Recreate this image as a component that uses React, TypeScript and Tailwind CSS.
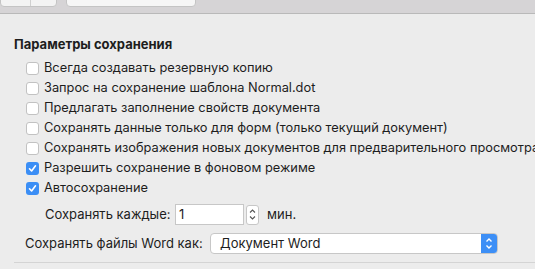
import React from 'react';

const font = { fontFamily: 'Inter, "Noto Sans", sans-serif' };

function Check({ checked }: { checked?: boolean }) {
  if (checked) {
    return (
      <span className="flex h-[13px] w-[13px] shrink-0 items-center justify-center rounded-[3px] bg-[#3b8ef5]">
        <svg width="9" height="9" viewBox="0 0 9 9" fill="none">
          <path d="M1.5 4.8 L3.6 7 L7.5 1.8" stroke="white" strokeWidth="1.6" strokeLinecap="round" strokeLinejoin="round" />
        </svg>
      </span>
    );
  }
  return <span className="h-[13px] w-[13px] shrink-0 rounded-[3px] border border-[#c2c2c2] bg-white" />;
}

const rows: { label: string; checked?: boolean }[] = [
  { label: 'Всегда создавать резервную копию' },
  { label: 'Запрос на сохранение шаблона Normal.dot' },
  { label: 'Предлагать заполнение свойств документа' },
  { label: 'Сохранять данные только для форм (только текущий документ)' },
  { label: 'Сохранять изображения новых документов для предварительного просмотра' },
  { label: 'Разрешить сохранение в фоновом режиме', checked: true },
  { label: 'Автосохранение', checked: true },
];

export default function App() {
  return (
    <div className="h-[269px] w-[535px] overflow-hidden bg-[#ececec] text-[13px] text-[#1d1d1d]" style={font}>
      <div className="relative h-[14px] border-b border-[#b9b9b9] bg-[#d6d4d6]">
        <div className="absolute -top-[8px] left-0 flex h-[15px] w-[57px] rounded-b-[4px] border border-[#c4c4c4] bg-[#f3f3f3]">
          <div className="w-[30px] border-r border-[#d0d0d0]" />
        </div>
        <div className="absolute -top-[8px] left-[66px] h-[15px] w-[130px] rounded-b-[4px] border border-[#c4c4c4] bg-[#f6f6f6]" />
      </div>

      <div className="pl-[14px] pt-[22px]">
        <div className="font-bold leading-[16px]">Параметры сохранения</div>
        <div className="mt-[6px] flex flex-col">
          {rows.map((r) => (
            <div key={r.label} className="flex h-[20px] items-center gap-[5px] whitespace-nowrap pl-[12px] text-[12.8px]">
              <Check checked={r.checked} />
              <span>{r.label}</span>
            </div>
          ))}
        </div>

        <div className="mt-[6px] flex items-center whitespace-nowrap pl-[31px]">
          <span className="w-[130px]">Сохранять каждые:</span>
          <div className="flex h-[21px] w-[69px] items-center border border-[#c7c7c7] bg-white pl-[3px]">1</div>
          <div className="ml-[2px] flex h-[20px] w-[13px] flex-col items-center justify-center rounded-[3px] border border-[#c7c7c7] bg-white">
            <svg width="7" height="13" viewBox="0 0 7 13" fill="none">
              <path d="M1 4.5 L3.5 2 L6 4.5 M1 8.5 L3.5 11 L6 8.5" stroke="#555" strokeWidth="1.1" />
            </svg>
          </div>
          <span className="ml-[8px]">мин.</span>
        </div>

        <div className="mt-[8px] flex items-center whitespace-nowrap pl-[11px]">
          <span className="w-[185px]">Сохранять файлы Word как:</span>
          <div className="flex h-[21px] w-[288px] items-center overflow-hidden rounded-[4px] border border-[#c7c7c7] bg-white">
            <span className="flex-1 pl-[9px]">Документ Word</span>
            <div className="flex h-full w-[16px] items-center justify-center bg-[#3d8ff6]">
              <svg width="8" height="13" viewBox="0 0 8 13" fill="none">
                <path d="M1.5 4.5 L4 2 L6.5 4.5 M1.5 8.5 L4 11 L6.5 8.5" stroke="white" strokeWidth="1.4" />
              </svg>
            </div>
          </div>
        </div>

        <div className="mt-[8px] border-t border-[#d4d4d4]" />
      </div>
    </div>
  );
}
